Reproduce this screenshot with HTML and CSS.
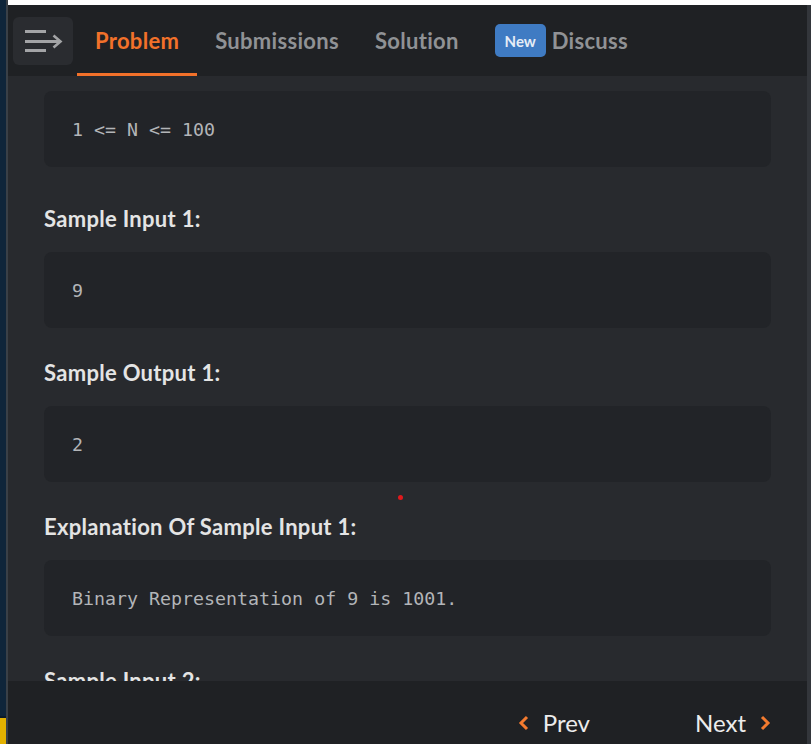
FILE: index.html
```html
<!DOCTYPE html>
<html lang="en">
<head>
<meta charset="utf-8">
<title>Problem</title>
<link rel="stylesheet" href="styles.css">
</head>
<body>
<div class="frame">
  <div class="left-strip"><div class="navy"></div><div class="yellow"></div></div>
  <div class="panel">
    <div class="topbar"></div>
    <header class="header">
      <button class="menu-btn" aria-label="menu">
        <svg width="60" height="48" viewBox="0 0 60 48">
          <g stroke="#a3a4a6" stroke-width="3" fill="none">
            <line x1="12" y1="14.5" x2="33" y2="14.5"/>
            <line x1="12" y1="24.5" x2="47" y2="24.5"/>
            <polyline points="40.5,18.5 47.5,24.5 40.5,30.5" stroke-width="2.6"/>
            <line x1="12" y1="33.5" x2="33" y2="33.5"/>
          </g>
        </svg>
      </button>
      <nav class="tabs">
        <a class="tab active">Problem</a>
        <a class="tab">Submissions</a>
        <a class="tab">Solution</a>
        <a class="tab"><span class="badge">New</span>Discuss</a>
      </nav>
    </header>
    <main class="content">
      <div class="code first">1 &lt;= N &lt;= 100</div>
      <h3 class="heading">Sample Input 1:</h3>
      <div class="code">9</div>
      <h3 class="heading">Sample Output 1:</h3>
      <div class="code">2</div>
      <h3 class="heading">Explanation Of Sample Input 1:</h3>
      <div class="code">Binary Representation of 9 is 1001.</div>
      <h3 class="heading">Sample Input 2:</h3>
    </main>
    <footer class="footer">
      <a class="nav-btn">
        <svg width="12" height="16" viewBox="0 0 12 16"><polyline points="9,2 3,8 9,14" fill="none" stroke="#f47b2f" stroke-width="3"/></svg>
        <span>Prev</span>
      </a>
      <a class="nav-btn">
        <span>Next</span>
        <svg width="12" height="16" viewBox="0 0 12 16"><polyline points="3,2 9,8 3,14" fill="none" stroke="#f47b2f" stroke-width="3"/></svg>
      </a>
    </footer>
    <div class="cursor-dot"></div>
  </div>
  <div class="right-strip"></div>
</div>
</body>
</html>
```

FILE: styles.css
```css
* { box-sizing: border-box; }
html, body { margin: 0; padding: 0; }
body {
  width: 811px;
  height: 744px;
  overflow: hidden;
  background: #282a2e;
  font-family: Lato, "Open Sans", sans-serif;
}
.frame {
  display: flex;
  width: 811px;
  height: 744px;
}
.left-strip {
  width: 8px;
  display: flex;
  flex-direction: column;
  border-right: 2px solid #3a4047;
}
.left-strip .navy { flex: 1; background: #0f253a; border-bottom: 2px solid #0b1a28; }
.left-strip .yellow { height: 26px; background: #e3b100; }
.right-strip {
  width: 4px;
  background: #33363b;
  border-top: 5px solid #ffffff;
}
.panel {
  flex: 1;
  display: flex;
  flex-direction: column;
  position: relative;
  background: #282a2e;
  overflow: hidden;
}
.topbar { height: 5px; background: #ffffff; flex: none; }
.header {
  flex: none;
  height: 71px;
  background: #1f2124;
  display: flex;
  align-items: stretch;
  padding-left: 5px;
}
.menu-btn {
  align-self: flex-start;
  margin-top: 12px;
  width: 60px;
  height: 48px;
  border: 0;
  padding: 0;
  border-radius: 6px;
  background: #2a2c30;
  display: block;
}
.menu-btn svg { display: block; }
.tabs {
  display: flex;
  margin-left: 4px;
}
.tab {
  display: flex;
  align-items: center;
  padding: 3px 18px 0;
  font-size: 22px;
  letter-spacing: 0.3px;
  font-weight: 700;
  color: #909295;
  border-bottom: 3px solid transparent;
}
.tab.active {
  color: #f2712a;
  border-bottom-color: #f2712a;
}
.badge {
  display: inline-flex;
  align-items: center;
  justify-content: center;
  width: 51px;
  height: 33px;
  margin-right: 6px;
  border-radius: 5px;
  background: #3f7bc3;
  color: #e6edf6;
  font-size: 15px;
  letter-spacing: 0;
  font-weight: 700;
}
.content {
  flex: 1;
  overflow: hidden;
  padding: 15px 36px 0;
  display: flex;
  flex-direction: column;
}
.code {
  flex: none;
  height: 76px;
  display: flex;
  align-items: center;
  padding-left: 28px;
  border-radius: 8px;
  background: #222428;
  color: #b3b5b8;
  font-family: "DejaVu Sans Mono", "Liberation Mono", monospace;
  font-size: 18.3px;
  white-space: pre;
}
.heading {
  flex: none;
  margin: 33px 0 21px;
  font-size: 22px;
  letter-spacing: 0.3px;
  line-height: 24px;
  font-weight: 700;
  color: #e4e4e4;
}
.code.first + .heading { margin-top: 40px; }
.footer {
  position: absolute;
  left: 0;
  right: 0;
  bottom: 0;
  height: 63px;
  background: #1f2124;
  display: flex;
  justify-content: flex-end;
  align-items: flex-start;
  gap: 105px;
  padding: 27px 36px 0 0;
}
.nav-btn {
  display: flex;
  align-items: center;
  gap: 13px;
  color: #ececec;
  font-size: 24px;
  line-height: 29px;
  font-weight: 400;
}
.nav-btn svg { display: block; }
.cursor-dot {
  position: absolute;
  left: 390px;
  top: 495px;
  width: 5px;
  height: 5px;
  border-radius: 50%;
  background: #e0191c;
}
```
